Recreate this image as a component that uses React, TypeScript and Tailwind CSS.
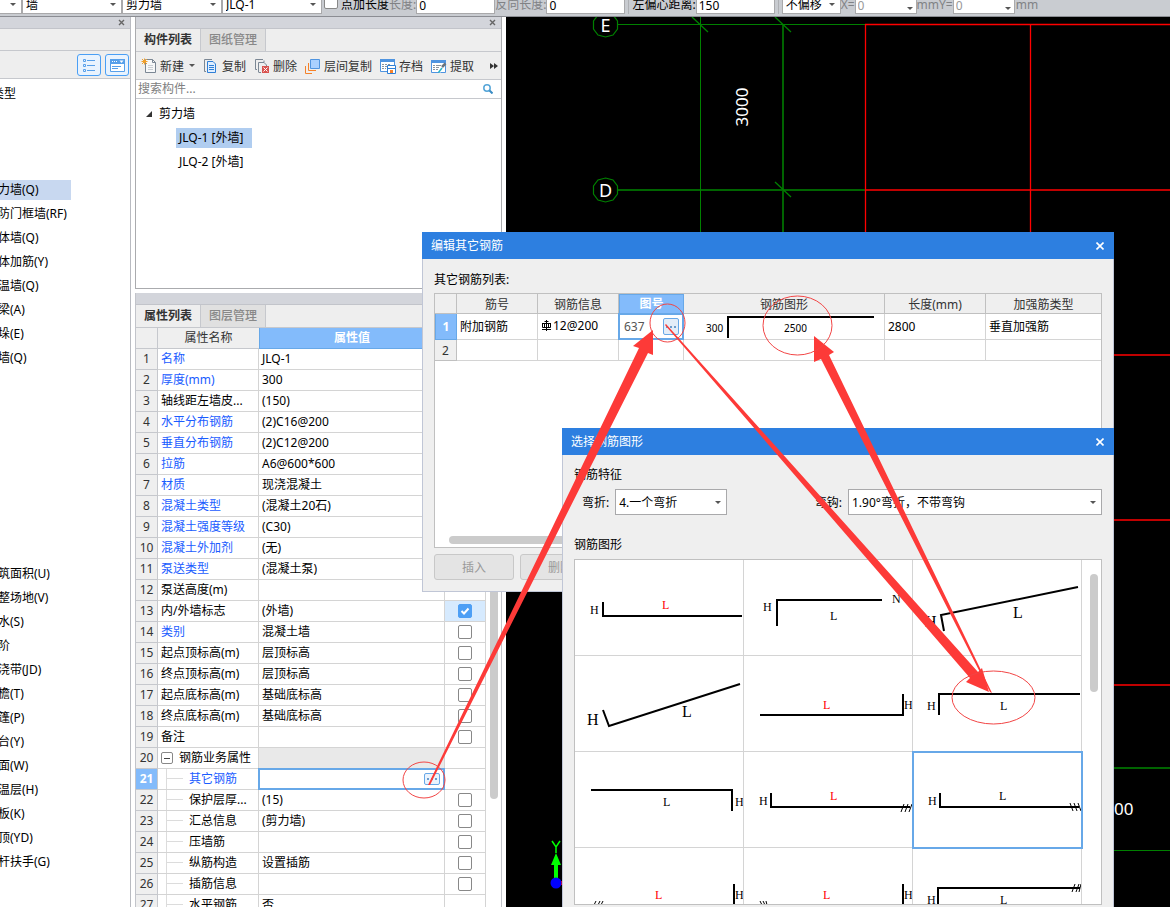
import type { ReactNode } from "react";
import clsx from "clsx";

interface PropertyRow {
  name: string;
  value: string;
  blue?: boolean;
  check?: boolean;
  child?: boolean;
}

interface Shape {
  path: string;
  hatch?: string;
  labels: { x: number; y: number; text: string; red?: boolean; big?: boolean }[];
}

const categories = [
  "", "", "",
  "力墙(Q)", "防门框墙(RF)", "体墙(Q)", "体加筋(Y)", "温墙(Q)", "梁(A)", "垛(E)", "墙(Q)",
  "", "", "", "", "", "", "", "",
  "筑面积(U)", "整场地(V)", "水(S)", "阶", "浇带(JD)", "檐(T)", "篷(P)", "台(Y)",
  "面(W)", "温层(H)", "板(K)", "顶(YD)", "杆扶手(G)",
];

const properties: PropertyRow[] = [
  { name: "名称", value: "JLQ-1", blue: true },
  { name: "厚度(mm)", value: "300", blue: true, check: false },
  { name: "轴线距左墙皮...", value: "(150)", check: false },
  { name: "水平分布钢筋", value: "(2)C16@200", blue: true, check: false },
  { name: "垂直分布钢筋", value: "(2)C12@200", blue: true, check: false },
  { name: "拉筋", value: "A6@600*600", blue: true, check: false },
  { name: "材质", value: "现浇混凝土", blue: true, check: false },
  { name: "混凝土类型", value: "(混凝土20石)", blue: true, check: false },
  { name: "混凝土强度等级", value: "(C30)", blue: true, check: false },
  { name: "混凝土外加剂", value: "(无)", blue: true },
  { name: "泵送类型", value: "(混凝土泵)", blue: true },
  { name: "泵送高度(m)", value: "" },
  { name: "内/外墙标志", value: "(外墙)", check: true },
  { name: "类别", value: "混凝土墙", blue: true, check: false },
  { name: "起点顶标高(m)", value: "层顶标高", check: false },
  { name: "终点顶标高(m)", value: "层顶标高", check: false },
  { name: "起点底标高(m)", value: "基础底标高", check: false },
  { name: "终点底标高(m)", value: "基础底标高", check: false },
  { name: "备注", value: "", check: false },
  { name: "钢筋业务属性", value: "" },
  { name: "其它钢筋", value: "", blue: true, child: true },
  { name: "保护层厚...", value: "(15)", check: false, child: true },
  { name: "汇总信息", value: "(剪力墙)", check: false, child: true },
  { name: "压墙筋", value: "", check: false, child: true },
  { name: "纵筋构造", value: "设置插筋", check: false, child: true },
  { name: "插筋信息", value: "", check: false, child: true },
  { name: "水平钢筋", value: "否", child: true },
];

const GROUP_ROW = 19;
const ACTIVE_ROW = 20;

const shapes: Shape[] = [
  {
    path: "M28 42V56H167",
    labels: [{ x: 15, y: 54, text: "H" }, { x: 87, y: 49, text: "L", red: true }],
  },
  {
    path: "M33 66V40H138",
    labels: [{ x: 19, y: 51, text: "H" }, { x: 86, y: 60, text: "L" }, { x: 148, y: 43, text: "N" }],
  },
  {
    path: "M31 71L28 55L165 27",
    labels: [{ x: 12, y: 67, text: "H", big: true }, { x: 100, y: 58, text: "L", big: true }],
  },
  {
    path: "M28 54L34 70L165 28",
    labels: [{ x: 12, y: 69, text: "H", big: true }, { x: 107, y: 61, text: "L", big: true }],
  },
  {
    path: "M16 59H159V38",
    labels: [{ x: 79, y: 53, text: "L", red: true }, { x: 160, y: 53, text: "H" }],
  },
  {
    path: "M26 59V38H167",
    labels: [{ x: 14, y: 54, text: "H" }, { x: 87, y: 54, text: "L" }],
  },
  {
    path: "M16 38H157V59",
    labels: [{ x: 88, y: 54, text: "L" }, { x: 160, y: 54, text: "H" }],
  },
  {
    path: "M27 41V55H166",
    hatch: "M157 60l3 -8M161 60l3 -8M165 60l3 -8",
    labels: [{ x: 15, y: 53, text: "H" }, { x: 86, y: 48, text: "L", red: true }],
  },
  {
    path: "M27 41V55H166",
    hatch: "M157 51l3 8M161 51l3 8M165 51l3 8",
    labels: [{ x: 15, y: 53, text: "H" }, { x: 86, y: 48, text: "L" }],
  },
  {
    path: "M159 36V64H24",
    hatch: "M19 57l2 -4M23 57l2 -4M26 57l2 -4",
    labels: [{ x: 80, y: 51, text: "L", red: true }, { x: 160, y: 51, text: "H" }],
  },
  {
    path: "M159 36V64H20",
    hatch: "M16 53l2 4M19 53l2 4M22 53l1 4",
    labels: [{ x: 79, y: 51, text: "L", red: true }, { x: 160, y: 51, text: "H" }],
  },
  {
    path: "M25 61V40H167",
    hatch: "M159 44l3 -8M163 44l3 -8M166 44l2 -8",
    labels: [{ x: 14, y: 56, text: "H" }, { x: 87, y: 56, text: "L" }],
  },
];

function Caret({ className }: { className?: string }) {
  return (
    <svg className={className} width="6" height="3" viewBox="0 0 6 3" aria-hidden="true">
      <path d="M0 0H6L3 3Z" fill="#555" />
    </svg>
  );
}

function Combo({ label, value, className }: { label: string; value: string; className: string }) {
  return (
    <div className={clsx("relative shrink-0 border border-[#a9a9ab] bg-white", className)}>
      <select aria-label={label} className="block h-full w-full appearance-none bg-transparent pl-[3px] pt-0.5 outline-none">
        <option>{value}</option>
      </select>
      <Caret className="pointer-events-none absolute right-[5px] top-1/2 -mt-px" />
    </div>
  );
}

// number box with its caption in front
function BarField({ id, label, value, muted, spin, narrow }: {
  id: string;
  label: string;
  value: string;
  muted?: boolean;
  spin?: boolean;
  narrow?: boolean;
}) {
  return (
    <div className="relative flex shrink-0 items-center">
      <label htmlFor={id} className={clsx("pt-0.5", muted && "text-[#808285]")}>
        {label}
      </label>
      <input
        id={id}
        defaultValue={value}
        className={clsx(
          "h-5 border border-[#a9a9ab] bg-white pl-0.5 pt-0.5 outline-none",
          narrow ? "w-[62px] text-[#999]" : "w-[79px]"
        )}
      />
      {spin && <Caret className="absolute bottom-1 right-1" />}
    </div>
  );
}

function TopBar() {
  return (
    <div className="flex h-[17px] shrink-0 items-end overflow-hidden border-b border-[#8b8d93] bg-[#c9ccd1] pb-0.5">
      <Combo label="楼层" value="" className="h-5 w-[22px] border-l-0" />
      <Combo label="构件大类" value="墙" className="h-5 w-[100px]" />
      <Combo label="构件类型" value="剪力墙" className="h-5 w-[100px]" />
      <Combo label="构件" value="JLQ-1" className="mr-0.5 h-5 w-[100px]" />
      <div className="flex h-5 shrink-0 items-center">
        <input
          id="point-length"
          type="checkbox"
          className="mb-1 h-3.5 w-3.5 appearance-none rounded-[2px] border border-[#888] bg-white"
        />
        <label htmlFor="point-length" className="pl-[3px] pt-0.5">点加长度</label>
      </div>
      <BarField id="len" label="长度:" value="0" muted />
      <BarField id="back-len" label="反向长度:" value="0" muted />
      <div className="mx-[3px] h-5 w-px shrink-0 bg-[#aeb0b4]" />
      <BarField id="offset" label="左偏心距离:" value="150" />
      <div className="mx-[3px] h-5 w-px shrink-0 bg-[#aeb0b4]" />
      <Combo label="偏移方式" value="不偏移" className="h-5 w-[59px]" />
      <BarField id="off-x" label="X=" value="0" muted spin narrow />
      <BarField id="off-y" label="mmY=" value="0" muted spin narrow />
      <span className="flex h-5 items-center pl-px pt-0.5 text-[#808285]">mm</span>
    </div>
  );
}

function PanelStrip({ closable }: { closable?: boolean }) {
  return (
    <div className="flex h-3 shrink-0 items-center justify-end border-b border-[#c2c4ca] bg-[#d3d5db] pr-[5px]">
      {closable && (
        <button aria-label="关闭">
          <svg width="7" height="7" viewBox="0 0 7 7" className="block">
            <path d="M1 1L6 6M6 1L1 6" stroke="#666" strokeWidth="1.4" />
          </svg>
        </button>
      )}
    </div>
  );
}

function CategoryPanel() {
  return (
    <aside className="flex w-[131px] shrink-0 flex-col border-r border-[#b9bbc1] bg-white">
      <PanelStrip closable />
      <div className="h-[22px] shrink-0 border-b border-[#c6c8cd] bg-[#eee]" />
      <div className="flex h-7 shrink-0 items-center justify-end gap-1 border-b border-[#c6c8cd] bg-[#eee] pr-px">
        <button aria-label="列表显示" className="rounded-[3px] border border-[#4a9ff5] bg-[#e9f3fe]">
          <svg width="22" height="20" viewBox="0 0 22 20" fill="none">
            <path d="M9 5.500H17M9 10.500H17M9 15.500H17" stroke="#58a0ea" />
            <path d="M5.500 4.500h2v2h-2zM5.500 9.500h2v2h-2zM5.500 14.500h2v2h-2z" stroke="#58a0ea" />
          </svg>
        </button>
        <button aria-label="图标显示" className="rounded-[3px] border border-[#4a9ff5] bg-[#e9f3fe]">
          <svg width="22" height="20" viewBox="0 0 22 20" fill="none">
            <path d="M4.500 4.500H18.500V16.500H4.500Z" fill="#fff" stroke="#58a0ea" />
            <path d="M4 4H19V9H4Z" fill="#58a0ea" />
            <path d="M6 6.500H7M8 6.500H9M10 6.500H11" stroke="#fff" />
            <path d="M13.500 5.500H17.500L15.500 8Z" fill="#fff" />
            <path d="M6 11.500H15M6 13.500H12" stroke="#58a0ea" />
          </svg>
        </button>
      </div>
      <ul className="flex-1 overflow-hidden pt-[3px] leading-6">
        <li className="-ml-2">类型</li>
        {categories.map((name, i) => (
          <li key={i} className="flex h-6 items-center">
            <span
              className={clsx(
                "-ml-0.5 whitespace-nowrap",
                i === 3 && "w-[73px] bg-[#c8d8f0] leading-5"
              )}
            >
              {name}
            </span>
          </li>
        ))}
      </ul>
    </aside>
  );
}

function Tabs({ names }: { names: string[] }) {
  return (
    <div className="flex h-[23px] shrink-0 border-b border-[#c6c8cd] bg-[#eee]">
      {names.map((name, i) => (
        <button
          key={name}
          className={clsx(
            "w-[65px] border-r border-[#c6c8cd] text-center",
            i === 0 ? "font-bold text-[#333]" : "bg-[#e0e0e0] font-medium text-[#888]"
          )}
        >
          {name}
        </button>
      ))}
    </div>
  );
}

function ToolButton({ label, menu, children }: { label: string; menu?: boolean; children: ReactNode }) {
  return (
    <button className="flex shrink-0 items-center gap-[3px] text-[#333]">
      <svg width="16" height="16" viewBox="0 0 16 16" fill="none" aria-hidden="true">
        {children}
      </svg>
      <span className="pt-0.5">{label}</span>
      {menu && <Caret className="ml-0.5" />}
    </button>
  );
}

function ComponentToolbar() {
  return (
    <div className="flex h-7 shrink-0 items-center gap-2 border-b border-[#c6c8cd] bg-[#eee] pl-[5px]">
      <ToolButton label="新建" menu>
        <path d="M4.500 1.500H11.500L14.500 4.500V14.500H4.500Z" fill="#f7f8f9" stroke="#7b8794" />
        <path d="M11.500 1.500V4.500H14.500" stroke="#7b8794" />
        <path d="M7 7.500H12M7 9.500H12M7 11.500H12" stroke="#c9ced4" />
        <path d="M1 1L6 6M6 1L1 6M3.500 .5V6.500M.5 3.500H6.500" stroke="#f0a02c" />
      </ToolButton>
      <ToolButton label="复制">
        <path d="M9 1.500H1.500V13.500H3" stroke="#7b8794" />
        <path d="M4.500 3.500H10L12.500 6V14.500H4.500Z" fill="#dfeeff" stroke="#2f7fd6" />
        <path d="M6 7.500H11M6 9.500H11M6 11.500H11" stroke="#2f7fd6" />
      </ToolButton>
      <ToolButton label="删除">
        <path d="M9 1.500H1.500V11.500H3M4.500 14.500H7M4.500 14V4.500H10L12.500 7V8M10 4.500V2.500" stroke="#7b8794" />
        <path d="M8 8H15V15H8Z" fill="#d9534f" />
        <path d="M9.500 9.500L13.500 13.500M13.500 9.500L9.500 13.500" stroke="#fff" />
      </ToolButton>
      <ToolButton label="层间复制">
        <path d="M5.500 1.500H14.500V10.500H5.500Z" fill="#a9d0ff" stroke="#4f94e0" />
        <path d="M3.500 5V12.500H11M.5 8V15.500H7" stroke="#f5822a" />
      </ToolButton>
      <ToolButton label="存档">
        <path d="M.5 1.500H14.500V13.500H.5Z" fill="#fff" stroke="#4f94e0" />
        <path d="M0 1H15V4H0Z" fill="#4f94e0" />
        <path d="M2 6.500H4M5 6.500H7M8 6.500H10M2 8.500H4M5 8.500H7M2 10.500H4M5 10.500H6" stroke="#8a949e" />
        <path d="M7.500 7.500H15.500V15.500H7.500Z" fill="#fff" stroke="#2f7fd6" />
        <path d="M7.500 10.500H15.500" stroke="#2f7fd6" />
        <path d="M10 12H13V15H10Z" fill="#f5822a" />
      </ToolButton>
      <ToolButton label="提取">
        <path d="M.5 2.500H14.500V14.500H.5Z" fill="#fff" stroke="#4f94e0" />
        <path d="M0 2H15V5H0Z" fill="#4f94e0" />
        <path d="M2 7.500H4M5 7.500H10M2 9.500H4M5 9.500H8M2 11.500H4M5 11.500H7" stroke="#8a949e" />
        <path d="M8 14L13 7" stroke="#fff" strokeWidth="3" />
        <path d="M11 9L14.500 5.500" stroke="#6b747d" strokeWidth="2.500" />
        <path d="M7.500 14.500L11 10" stroke="#2ab5c8" strokeWidth="1.500" />
      </ToolButton>
      <button aria-label="更多" className="ml-auto pr-[3px]">
        <svg width="8" height="6" viewBox="0 0 8 6" className="block">
          <path d="M0 0L4 3L0 6ZM4 0L8 3L4 6Z" fill="#333" />
        </svg>
      </button>
    </div>
  );
}

function PropertyTable() {
  return (
    <table className="w-[350px] shrink-0 table-fixed border-separate border-spacing-0 leading-5">
      <colgroup>
        <col className="w-[22px]" />
        <col className="w-[101px]" />
        <col className="w-[186px]" />
        <col className="w-[41px]" />
      </colgroup>
      <thead>
        <tr className="text-[#333]">
          <th className="h-[21px] border-b border-r border-[#c6c8cd] bg-[#efefef] p-0" />
          <th className="border-b border-[#c6c8cd] bg-[#efefef] p-0 font-normal">属性名称</th>
          <th className="border border-t-0 border-[#67a8e8] bg-[#83bbfb] p-0 font-bold text-white">属性值</th>
          <th className="border-b border-r border-[#c6c8cd] bg-[#efefef] p-0" />
        </tr>
      </thead>
      <tbody>
        {properties.map((row, i) => (
          <tr key={i}>
            <th
              className={clsx(
                "h-[21px] border-b border-r border-[#c6c8cd] p-0 text-center",
                i === ACTIVE_ROW ? "bg-[#83bbfb] font-bold text-white" : "bg-[#efefef] font-normal text-[#333]"
              )}
            >
              {i + 1}
            </th>
            <td
              className={clsx(
                "whitespace-nowrap border-b border-r border-[#d4d4d4] p-0",
                row.blue && "text-[#1a5cff]"
              )}
            >
              <div className="flex items-center pl-[3px]">
                {i === GROUP_ROW && (
                  <button
                    aria-label="折叠"
                    className="mr-1.5 flex h-3 w-3 items-center justify-center rounded-[2px] border border-[#888]"
                  >
                    <span className="h-px w-1.5 bg-[#444]" />
                  </button>
                )}
                {row.child && (
                  <svg width="28" height="20" className="block shrink-0" aria-hidden="true">
                    <path d="M5.500 0V20M5 9.500H22" stroke="#dcdcdc" fill="none" />
                  </svg>
                )}
                {row.name}
              </div>
            </td>
            <td
              className={clsx(
                "whitespace-nowrap border-b border-r border-[#d4d4d4] p-0",
                i === GROUP_ROW && "bg-[#e9e9e9]"
              )}
            >
              {i === ACTIVE_ROW ? (
                <div className="flex h-5 items-center pr-1 outline-2 -outline-offset-1 outline-[#67a8e8]">
                  <input aria-label="其它钢筋" className="h-4 min-w-0 flex-1 bg-transparent pl-[3px] outline-none" />
                  <button
                    aria-label="编辑其它钢筋"
                    className="flex h-3 w-4 items-center justify-center rounded-[2px] border border-[#67a8e8] bg-[#eaf3fd]"
                  >
                    <Dots />
                  </button>
                </div>
              ) : (
                <span className="pl-[3px]">{row.value}</span>
              )}
            </td>
            <td className={clsx("border-b border-r border-[#d4d4d4] p-0", row.check && "bg-[#d6eafe]")}>
              {row.check !== undefined && (
                <div className="relative mx-auto h-3.5 w-3.5">
                  <input
                    type="checkbox"
                    aria-label={row.name}
                    defaultChecked={row.check}
                    className="peer block h-3.5 w-3.5 appearance-none rounded-[2px] border border-[#888] bg-white checked:border-[#4d9ff5] checked:bg-[#4d9ff5]"
                  />
                  <svg
                    width="14"
                    height="14"
                    viewBox="0 0 14 14"
                    className="pointer-events-none absolute inset-0 hidden peer-checked:block"
                  >
                    <path d="M3.500 7L6 9.500L10.500 4.500" stroke="#fff" strokeWidth="2" fill="none" />
                  </svg>
                </div>
              )}
            </td>
          </tr>
        ))}
      </tbody>
    </table>
  );
}

function Dots() {
  return (
    <svg width="12" height="2" viewBox="0 0 12 2" aria-hidden="true">
      <path d="M1 1H3M5 1H7M9 1H11" stroke="#6c9ccc" strokeWidth="2" />
    </svg>
  );
}

function ComponentPanel() {
  return (
    <section className="ml-1 flex w-[367px] shrink-0 flex-col bg-white">
      <div className="flex h-[272px] shrink-0 flex-col border border-t-0 border-[#aaabae]">
        <PanelStrip closable />
        <Tabs names={["构件列表", "图纸管理"]} />
        <ComponentToolbar />
        <div className="flex h-[19px] shrink-0 items-center border-b border-[#c6c8cd] pl-0.5 pr-2">
          <input
            aria-label="搜索构件"
            placeholder="搜索构件..."
            className="h-4 min-w-0 flex-1 outline-none placeholder:text-[#808080]"
          />
          <svg width="10" height="10" viewBox="0 0 10 10" fill="none">
            <circle cx="4" cy="4" r="3.200" stroke="#55a5d8" strokeWidth="1.500" />
            <path d="M6.500 6.500L9.500 9.500" stroke="#3a8cc4" strokeWidth="2" />
          </svg>
        </div>
        <ul className="pt-[3px] leading-6">
          <li className="flex items-center gap-[7px] pl-2.5">
            <svg width="6" height="6" viewBox="0 0 6 6">
              <path d="M6 0V6H0Z" fill="#333" />
            </svg>
            剪力墙
          </li>
          <li className="flex h-6 items-center pl-10">
            <span className="w-[76px] bg-[#b0cdf0] pl-[3px] leading-5">JLQ-1 [外墙]</span>
          </li>
          <li className="pl-[43px]">JLQ-2 [外墙]</li>
        </ul>
      </div>
      <div className="mt-1 flex min-h-0 flex-1 flex-col border-x border-[#c2c4ca]">
        <PanelStrip />
        <Tabs names={["属性列表", "图层管理"]} />
        <div className="flex min-h-0 flex-1 overflow-hidden">
          <PropertyTable />
          <div className="ml-1 h-[471px] w-2 rounded-full bg-[#cbcbcb]" />
        </div>
      </div>
    </section>
  );
}

function DrawingCanvas() {
  return (
    <main className="ml-1 min-w-0 flex-1 overflow-hidden bg-black">
      <svg width="100%" height="100%" fill="none" className="block">
        <g transform="translate(-506 -17)">
          <path d="M618 190H865M783 24V240M1100 768H2600" stroke="#006400" strokeWidth="2" />
          <path d="M618 24.500H865M700.500 17V240M1100 850.500H2600" stroke="#008000" />
          <path d="M692 17L708 32M775 17L791 32M775 182L791 197" stroke="#008000" strokeWidth="1.300" />
          <path d="M865 190H2600M1100 355H2600M1100 520H2600M1100 685H2600" stroke="#c00000" strokeWidth="2" />
          <path d="M865 24.500H2600M865.500 24V240M1030.500 24V240" stroke="#f00" strokeWidth="1.300" />
          <path d="M605.500 13L613 15L617.500 21V29L613 35L605.500 37L598 35L593.500 29V21L598 15ZM605.500 178L613 180L617.500 186V194L613 200L605.500 202L598 200L593.500 194V186L598 180Z" stroke="#008000" strokeWidth="1.200" />
          <g fill="#fff" fontSize="18" fontFamily="Noto Sans, sans-serif">
            <text x="605.500" y="32" textAnchor="middle">E</text>
            <text x="605.500" y="197" textAnchor="middle">D</text>
            <text transform="translate(748 107) rotate(-90)" textAnchor="middle" fontSize="17">3000</text>
            <text x="1114" y="815" fontSize="17">00</text>
          </g>
          <path d="M552 841L556 847L560 841M556 847V853" stroke="#0f0" strokeWidth="1.500" />
          <path d="M556 853L561 865H558V879H554V865H551Z" fill="#0f0" />
          <path d="M560 883H564" stroke="#f00" strokeWidth="4" />
          <circle cx="556" cy="883" r="5.500" fill="#00f" />
        </g>
      </svg>
    </main>
  );
}

function DialogTitle({ title }: { title: string }) {
  return (
    <div className="flex h-[27px] shrink-0 items-center justify-between bg-[#2d7fe0] pl-[9px] pr-2.5 text-white">
      <h2>{title}</h2>
      <button aria-label="关闭">
        <svg width="8" height="8" viewBox="0 0 8 8" className="block">
          <path d="M.5 .5L7.500 7.500M7.500 .5L.5 7.500" stroke="#fff" strokeWidth="1.600" />
        </svg>
      </button>
    </div>
  );
}

function EditRebarDialog() {
  const head = "border-b border-r border-[#c0c0c0] bg-[#efefef] p-0 pt-0.5 font-normal text-[#333]";
  const cell = "whitespace-nowrap border-b border-r border-[#d4d4d4] p-0 pl-[3px]";
  const button = "h-[26px] w-20 rounded-[3px] border border-[#c8c8c8] bg-[#e4e4e4] pt-0.5 text-[#999]";

  return (
    <div role="dialog" aria-label="编辑其它钢筋" className="absolute left-[422px] top-[232px] w-[692px]">
      <DialogTitle title="编辑其它钢筋" />
      <div className="border border-t-0 border-[#c0c6d6] bg-[#efefef] px-[11px] pb-[11px] pt-[11px]">
        <p className="leading-5">其它钢筋列表:</p>
        <div className="mt-[3px] flex h-[255px] flex-col border border-[#c0c0c0] bg-white">
          <table className="w-full table-fixed border-separate border-spacing-0">
            <colgroup>
              <col className="w-[22px]" />
              <col className="w-[81px]" />
              <col className="w-[81px]" />
              <col className="w-[65px]" />
              <col className="w-[201px]" />
              <col className="w-[101px]" />
              <col />
            </colgroup>
            <thead>
              <tr>
                <th className={clsx(head, "h-5")} />
                <th className={head}>筋号</th>
                <th className={head}>钢筋信息</th>
                <th className="border border-[#67a8e8] bg-[#83bbfb] p-0 font-bold text-white">图号</th>
                <th className={head}>钢筋图形</th>
                <th className={head}>长度(mm)</th>
                <th className={clsx(head, "border-r-0")}>加强筋类型</th>
              </tr>
            </thead>
            <tbody>
              <tr>
                <th className="h-[26px] border border-t-0 border-[#67a8e8] bg-[#83bbfb] p-0 font-bold text-white">1</th>
                <td className={cell}>附加钢筋</td>
                <td className={cell}>
                  <span className="flex items-center gap-px pb-0.5">
                    <svg width="11" height="12" viewBox="0 0 11 12" fill="none">
                      <path d="M5.500 0V11M1.500 3V7.500H9.500V3M3.500 1.500H7.500M1 3.500H10M1 9.500H10M3.500 3V7M7.500 3V7" stroke="#000" />
                    </svg>
                    12@200
                  </span>
                </td>
                <td className="border-b border-r border-[#d4d4d4] p-0">
                  <div className="flex h-[25px] items-center justify-between pl-[5px] pr-1 outline-2 -outline-offset-1 outline-[#67a8e8]">
                    <span className="text-[#555]">637</span>
                    <button
                      aria-label="选择图号"
                      className="flex h-[17px] w-4 items-center justify-center rounded-[2px] border border-[#67a8e8] bg-[#e3edf8]"
                    >
                      <Dots />
                    </button>
                  </div>
                </td>
                <td className="border-b border-r border-[#d4d4d4] p-0">
                  <svg width="200" height="25" className="block">
                    <path d="M44 24V3H190" stroke="#000" strokeWidth="2" fill="none" />
                    <text x="22" y="18" fontSize="10">300</text>
                    <text x="100" y="18" fontSize="10">2500</text>
                  </svg>
                </td>
                <td className={cell}>2800</td>
                <td className={clsx(cell, "border-r-0")}>垂直加强筋</td>
              </tr>
              <tr>
                <th className={clsx(head, "h-[21px]")}>2</th>
                <td className={cell} />
                <td className={cell} />
                <td className={cell} />
                <td className={cell} />
                <td className={cell} />
                <td className={clsx(cell, "border-r-0")} />
              </tr>
            </tbody>
          </table>
          <div className="mb-[3px] ml-3.5 mt-auto h-2 w-[480px] rounded-full bg-[#cbcbcb]" />
        </div>
        <div className="mt-1.5 flex gap-1.5">
          <button disabled className={button}>插入</button>
          <button disabled className={button}>删除</button>
        </div>
      </div>
    </div>
  );
}

function ShapeCell({ shape, selected }: { shape: Shape; selected: boolean }) {
  return (
    <button
      aria-label="钢筋图形"
      className={clsx(
        "h-24 border-b border-r border-[#d4d4d4] bg-white",
        selected && "relative outline-2 -outline-offset-1 outline-[#67a8e8]"
      )}
    >
      <svg width="168" height="95" className="block" fill="none">
        <path d={shape.path} stroke="#000" strokeWidth="2" />
        {shape.hatch && <path d={shape.hatch} stroke="#000" />}
        {shape.labels.map((l, i) => (
          <text
            key={i}
            x={l.x}
            y={l.y}
            fill={l.red ? "#f00" : "#000"}
            fontSize={l.big ? 16 : 12}
            fontFamily="Liberation Serif, serif"
          >
            {l.text}
          </text>
        ))}
      </svg>
    </button>
  );
}

function SelectShapeDialog() {
  return (
    <div
      role="dialog"
      aria-label="选择钢筋图形"
      className="absolute bottom-0 left-[562px] top-[428px] flex w-[552px] flex-col"
    >
      <DialogTitle title="选择钢筋图形" />
      <div className="flex min-h-0 flex-1 flex-col border-x border-[#c0c6d6] bg-[#efefef] px-[11px] pb-0.5 pt-2.5 leading-5">
        <p>钢筋特征</p>
        <div className="mt-1 flex items-center gap-1.5 pl-2">
          <span className="pt-0.5">弯折:</span>
          <Combo label="弯折" value="4.一个弯折" className="h-[26px] w-28" />
          <span className="ml-auto pt-0.5">弯钩:</span>
          <Combo label="弯钩" value="1.90°弯折，不带弯钩" className="h-[26px] w-[254px]" />
        </div>
        <p className="mt-5">钢筋图形</p>
        <div className="mt-1 flex min-h-0 flex-1 overflow-hidden border border-[#c0c0c0] bg-white">
          <div className="grid w-[507px] shrink-0 auto-rows-[96px] grid-cols-3">
            {shapes.map((shape, i) => (
              <ShapeCell key={i} shape={shape} selected={i === 8} />
            ))}
          </div>
          <div className="ml-auto mr-[3px] mt-3.5 h-[118px] w-2 rounded-full bg-[#cbcbcb]" />
        </div>
      </div>
    </div>
  );
}

// red arrows and rings drawn over the windows
function Annotations() {
  return (
    <svg className="pointer-events-none absolute inset-0 h-full w-full" fill="none" aria-hidden="true">
      <g fill="#fd3a38">
        <path d="M428 785L639 348L633 346L653 330V355L648 353L430 785Z" />
        <path d="M665 325L970 678L966 682L989 692L982 668L978 672L666 324Z" />
        <path d="M992 693L829 355L834 352L814 336V362L821 359L990 692Z" />
      </g>
      <g stroke="#f24545">
        <ellipse cx="424" cy="780" rx="21" ry="18" />
        <ellipse cx="667.500" cy="323" rx="17.500" ry="19" />
        <ellipse cx="797.500" cy="325.500" rx="34.500" ry="29.500" />
        <ellipse cx="993.500" cy="697.500" rx="41.500" ry="26.500" />
      </g>
    </svg>
  );
}

export default function App() {
  return (
    <div className="relative flex h-screen flex-col overflow-hidden bg-white font-['Noto_Sans','Noto_Sans_CJK_SC',sans-serif] text-[12px] leading-4 text-black">
      <TopBar />
      <div className="flex min-h-0 flex-1">
        <CategoryPanel />
        <ComponentPanel />
        <DrawingCanvas />
      </div>
      <EditRebarDialog />
      <SelectShapeDialog />
      <Annotations />
    </div>
  );
}
